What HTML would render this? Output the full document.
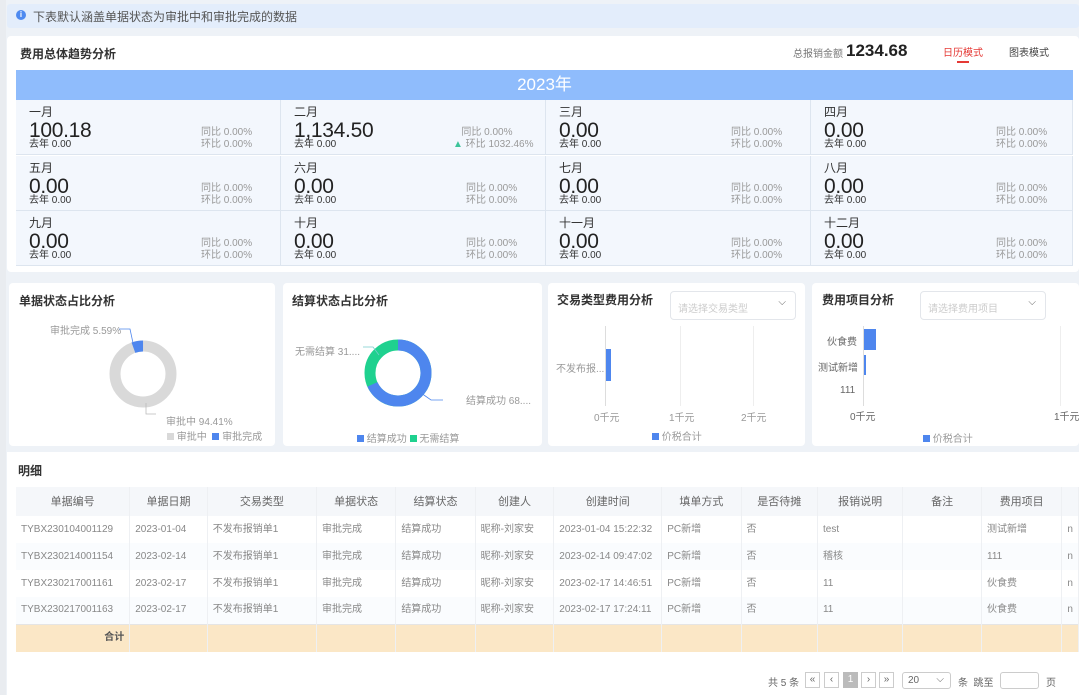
<!DOCTYPE html>
<html><head><meta charset="utf-8"><style>
*{margin:0;padding:0;box-sizing:border-box}
body{width:1079px;height:695px;overflow:hidden;background:#eef2f7;font-family:"Liberation Sans","Noto Sans CJK SC",sans-serif;position:relative;color:#333}
.a{position:absolute}
.card{position:absolute;background:#fff;border-radius:4px}
.cell{position:absolute;background:#f3f7fd;border-right:1px solid #dde5ef;border-bottom:1px solid #dde5ef;width:265px;height:55px}
.cell .m{position:absolute;left:13px;top:5px;font-size:12px;color:#333;line-height:14px}
.cell .v{position:absolute;left:13px;top:19px;font-size:21px;color:#222;letter-spacing:-0.3px;line-height:24px}
.cell .l{position:absolute;left:13px;top:39px;font-size:10px;color:#333;line-height:12px}
.cell .r{position:absolute;left:185px;top:27px;font-size:10px;color:#999;line-height:12px}
.ct{position:absolute;font-size:12px;font-weight:bold;color:#333}
.sm{font-size:10px;color:#999;position:absolute;white-space:nowrap}
.sq{display:inline-block;width:7px;height:7px;vertical-align:0}
table{position:absolute;left:16px;top:487px;border-collapse:collapse;font-size:10px;color:#888;table-layout:fixed}
td,th{height:27px;line-height:12px;padding:0 5px;white-space:nowrap;overflow:hidden;border-right:1px solid #eef0f3;font-weight:normal;text-align:left}
th{text-align:center;background:#f5f7fa;color:#666;font-size:11px;height:29px}
tr.odd td{background:#fff}tr.even td{background:#fafcfe}
tr.tot td{background:#fbe7c6;height:28px;border-top:1px solid #e5e5e5}
.pb{position:absolute;top:672px;width:15px;height:16px;border:1px solid #ccc;font-size:10px;text-align:center;line-height:14px;color:#666;background:#fff}
</style></head><body>
<div class="a" style="left:0;top:0;width:6px;height:695px;background:#e9ecf0"></div>
<div class="a" style="left:7px;top:4px;width:1072px;height:24px;background:#e3edfb;border-radius:3px"></div>
<div class="a" style="left:16px;top:10px;width:10px;height:10px;border-radius:50%;background:#4e8af0;color:#fff;font-size:8px;text-align:center;line-height:10px;font-weight:bold">i</div>
<div class="a" style="left:33px;top:8px;font-size:12px;color:#555">下表默认涵盖单据状态为审批中和审批完成的数据</div>

<div class="card" style="left:7px;top:36px;width:1072px;height:236px"></div>
<div class="ct" style="left:20px;top:45px">费用总体趋势分析</div>
<div class="a" style="left:793px;top:45px;font-size:10px;color:#777">总报销金额</div>
<div class="a" style="left:846px;top:41px;font-size:17px;color:#222;font-weight:bold">1234.68</div>
<div class="a" style="left:943px;top:44px;font-size:10px;color:#e53935">日历模式</div>
<div class="a" style="left:957px;top:61px;width:12px;height:2px;background:#e53935"></div>
<div class="a" style="left:1009px;top:44px;font-size:10px;color:#444">图表模式</div>
<div class="a" style="left:16px;top:70px;width:1057px;height:30px;background:#8fbcfc;color:#fff;font-size:17px;text-align:center;line-height:30px">2023年</div>

<div class="cell" style="left:16px;top:100px"><div class="m">一月</div><div class="v">100.18</div><div class="l">去年 0.00</div><div class="r">同比 0.00%<br>环比 0.00%</div></div>
<div class="cell" style="left:281px;top:100px"><div class="m">二月</div><div class="v">1,134.50</div><div class="l">去年 0.00</div><div class="r" style="left:172px">&nbsp;&nbsp;&nbsp;同比 0.00%<br><span style="color:#3cc49a">▲</span> 环比 1032.46%</div></div>
<div class="cell" style="left:546px;top:100px"><div class="m">三月</div><div class="v">0.00</div><div class="l">去年 0.00</div><div class="r">同比 0.00%<br>环比 0.00%</div></div>
<div class="cell" style="left:811px;top:100px;width:262px"><div class="m">四月</div><div class="v">0.00</div><div class="l">去年 0.00</div><div class="r">同比 0.00%<br>环比 0.00%</div></div>
<div class="cell" style="left:16px;top:156px"><div class="m">五月</div><div class="v">0.00</div><div class="l">去年 0.00</div><div class="r">同比 0.00%<br>环比 0.00%</div></div>
<div class="cell" style="left:281px;top:156px"><div class="m">六月</div><div class="v">0.00</div><div class="l">去年 0.00</div><div class="r">同比 0.00%<br>环比 0.00%</div></div>
<div class="cell" style="left:546px;top:156px"><div class="m">七月</div><div class="v">0.00</div><div class="l">去年 0.00</div><div class="r">同比 0.00%<br>环比 0.00%</div></div>
<div class="cell" style="left:811px;top:156px;width:262px"><div class="m">八月</div><div class="v">0.00</div><div class="l">去年 0.00</div><div class="r">同比 0.00%<br>环比 0.00%</div></div>
<div class="cell" style="left:16px;top:211px"><div class="m">九月</div><div class="v">0.00</div><div class="l">去年 0.00</div><div class="r">同比 0.00%<br>环比 0.00%</div></div>
<div class="cell" style="left:281px;top:211px"><div class="m">十月</div><div class="v">0.00</div><div class="l">去年 0.00</div><div class="r">同比 0.00%<br>环比 0.00%</div></div>
<div class="cell" style="left:546px;top:211px"><div class="m">十一月</div><div class="v">0.00</div><div class="l">去年 0.00</div><div class="r">同比 0.00%<br>环比 0.00%</div></div>
<div class="cell" style="left:811px;top:211px;width:262px"><div class="m">十二月</div><div class="v">0.00</div><div class="l">去年 0.00</div><div class="r">同比 0.00%<br>环比 0.00%</div></div>

<div class="card" style="left:9px;top:283px;width:266px;height:163px"></div>
<div class="ct" style="left:19px;top:292px">单据状态占比分析</div>
<svg class="a" style="left:9px;top:283px" width="266" height="163">
<circle cx="134" cy="91" r="28" fill="none" stroke="#d9d9d9" stroke-width="11"/>
<circle cx="134" cy="91" r="28" fill="none" stroke="#4e86ee" stroke-width="11" stroke-dasharray="9.8 200" transform="rotate(-110 134 91)"/>
<polyline points="110,46 121,46 124,60" fill="none" stroke="#4e86ee" stroke-width="0.8"/>
<polyline points="137,120 137,131 147,131" fill="none" stroke="#bbb" stroke-width="0.8"/>
</svg>
<div class="sm" style="left:50px;top:322px">审批完成 5.59%</div>
<div class="sm" style="left:166px;top:413px">审批中 94.41%</div>
<div class="sm" style="left:167px;top:428px"><span class="sq" style="background:#d9d9d9"></span> 审批中 &nbsp;<span class="sq" style="background:#4e86ee"></span> 审批完成</div>

<div class="card" style="left:283px;top:283px;width:259px;height:163px"></div>
<div class="ct" style="left:292px;top:292px">结算状态占比分析</div>
<svg class="a" style="left:283px;top:283px" width="259" height="163">
<circle cx="115" cy="90" r="28" fill="none" stroke="#1fd18f" stroke-width="11"/>
<circle cx="115" cy="90" r="28" fill="none" stroke="#4e86ee" stroke-width="11" stroke-dasharray="120 200" transform="rotate(-90 115 90)"/>
<polyline points="80,64 90,64 96,72" fill="none" stroke="#7cc" stroke-width="0.8"/>
<polyline points="138,110 148,117 160,117" fill="none" stroke="#4e86ee" stroke-width="0.8"/>
</svg>
<div class="sm" style="left:295px;top:343px">无需结算 31....</div>
<div class="sm" style="left:466px;top:392px">结算成功 68....</div>
<div class="sm" style="left:357px;top:430px"><span class="sq" style="background:#4e86ee"></span> 结算成功 <span class="sq" style="background:#1fd18f"></span> 无需结算</div>

<div class="card" style="left:548px;top:283px;width:257px;height:163px"></div>
<div class="ct" style="left:557px;top:291px">交易类型费用分析</div>
<div class="a" style="left:670px;top:291px;width:126px;height:29px;border:1px solid #e3e6eb;border-radius:4px;font-size:10px;color:#ccc;padding:8px 7px">请选择交易类型<span style="position:absolute;right:9px;top:5px;color:#666;font-size:10px">⌵</span></div>
<div class="a" style="left:605px;top:326px;width:1px;height:80px;background:#ddd"></div>
<div class="a" style="left:680px;top:326px;width:1px;height:80px;background:#eee"></div>
<div class="a" style="left:753px;top:326px;width:1px;height:80px;background:#eee"></div>
<div class="a" style="left:606px;top:349px;width:5px;height:32px;background:#4e86ee"></div>
<div class="sm" style="left:556px;top:360px">不发布报...</div>
<div class="sm" style="left:594px;top:409px">0千元</div><div class="sm" style="left:669px;top:409px">1千元</div><div class="sm" style="left:741px;top:409px">2千元</div>
<div class="sm" style="left:652px;top:428px"><span class="sq" style="background:#4e86ee"></span> 价税合计</div>

<div class="card" style="left:812px;top:283px;width:267px;height:163px"></div>
<div class="ct" style="left:822px;top:291px">费用项目分析</div>
<div class="a" style="left:920px;top:291px;width:126px;height:29px;border:1px solid #e3e6eb;border-radius:4px;font-size:10px;color:#ccc;padding:8px 7px">请选择费用项目<span style="position:absolute;right:9px;top:5px;color:#666;font-size:10px">⌵</span></div>
<div class="a" style="left:863px;top:326px;width:1px;height:80px;background:#ddd"></div>
<div class="a" style="left:1060px;top:326px;width:1px;height:80px;background:#eee"></div>
<div class="a" style="left:864px;top:329px;width:12px;height:21px;background:#4e86ee"></div>
<div class="a" style="left:864px;top:355px;width:2px;height:20px;background:#4e86ee"></div>
<div class="sm" style="left:827px;top:333px;color:#666">伙食费</div>
<div class="sm" style="left:818px;top:359px;color:#666">测试新增</div>
<div class="sm" style="left:840px;top:385px;color:#666">111</div>
<div class="sm" style="left:850px;top:408px;color:#666">0千元</div><div class="sm" style="left:1054px;top:408px;color:#666">1千元</div>
<div class="sm" style="left:923px;top:430px"><span class="sq" style="background:#4e86ee"></span> 价税合计</div>

<div class="card" style="left:7px;top:452px;width:1072px;height:243px;border-radius:0"></div>
<div class="ct" style="left:18px;top:462px">明细</div>
<table>
<colgroup><col style="width:114px"><col style="width:78px"><col style="width:110px"><col style="width:80px"><col style="width:80px"><col style="width:79px"><col style="width:108px"><col style="width:80px"><col style="width:77px"><col style="width:86px"><col style="width:80px"><col style="width:81px"><col style="width:10px"></colgroup>
<tr><th>单据编号</th><th>单据日期</th><th>交易类型</th><th>单据状态</th><th>结算状态</th><th>创建人</th><th>创建时间</th><th>填单方式</th><th>是否待摊</th><th>报销说明</th><th>备注</th><th>费用项目</th><th></th></tr>
<tr class="odd"><td>TYBX230104001129</td><td>2023-01-04</td><td>不发布报销单1</td><td>审批完成</td><td>结算成功</td><td>昵称-刘家安</td><td>2023-01-04 15:22:32</td><td>PC新增</td><td>否</td><td>test</td><td></td><td>测试新增</td><td>n</td></tr>
<tr class="even"><td>TYBX230214001154</td><td>2023-02-14</td><td>不发布报销单1</td><td>审批完成</td><td>结算成功</td><td>昵称-刘家安</td><td>2023-02-14 09:47:02</td><td>PC新增</td><td>否</td><td>稽核</td><td></td><td>111</td><td>n</td></tr>
<tr class="odd"><td>TYBX230217001161</td><td>2023-02-17</td><td>不发布报销单1</td><td>审批完成</td><td>结算成功</td><td>昵称-刘家安</td><td>2023-02-17 14:46:51</td><td>PC新增</td><td>否</td><td>11</td><td></td><td>伙食费</td><td>n</td></tr>
<tr class="even"><td>TYBX230217001163</td><td>2023-02-17</td><td>不发布报销单1</td><td>审批完成</td><td>结算成功</td><td>昵称-刘家安</td><td>2023-02-17 17:24:11</td><td>PC新增</td><td>否</td><td>11</td><td></td><td>伙食费</td><td>n</td></tr>
<tr class="tot"><td style="text-align:right;color:#555;font-weight:bold">合计</td><td></td><td></td><td></td><td></td><td></td><td></td><td></td><td></td><td></td><td></td><td></td><td></td></tr>
</table>
<div class="sm" style="left:768px;top:674px;color:#666">共 5 条</div>
<div class="pb" style="left:805px">«</div><div class="pb" style="left:824px">‹</div><div class="pb" style="left:843px;background:#bbb;color:#fff;border-color:#bbb">1</div><div class="pb" style="left:861px">›</div><div class="pb" style="left:879px">»</div>
<div class="a" style="left:902px;top:672px;width:49px;height:17px;border:1px solid #ccc;border-radius:3px;font-size:10px;color:#666;padding:2px 5px">20<span style="position:absolute;right:6px;top:1px">⌵</span></div>
<div class="sm" style="left:958px;top:674px;color:#666">条 &nbsp;跳至</div>
<div class="a" style="left:1000px;top:672px;width:39px;height:17px;border:1px solid #ccc;border-radius:3px"></div>
<div class="sm" style="left:1046px;top:674px;color:#666">页</div>
</body></html>
